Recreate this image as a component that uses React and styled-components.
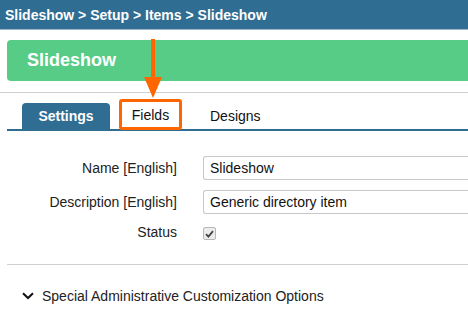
import React from "react";
import styled, { createGlobalStyle } from "styled-components";

const GlobalStyle = createGlobalStyle`
  body {
    margin: 0;
    font-family: "Liberation Sans", Arial, sans-serif;
    background: #fff;
  }
`;

const Page = styled.div`
  position: relative;
  width: 468px;
  height: 323px;
  overflow: hidden;
`;

const TopBar = styled.div`
  height: 29px;
  background: #2f6d93;
  border-bottom: 1px solid #9bb5c9;
  display: flex;
  align-items: center;
  padding-left: 5px;
  color: #fff;
  font-weight: bold;
  font-size: 14px;
`;

const Banner = styled.div`
  margin: 10px 0 0 7px;
  height: 41px;
  background: #57cc87;
  border-radius: 4px 0 0 4px;
  display: flex;
  align-items: center;
  padding-left: 20px;
  color: #fff;
  font-weight: bold;
  font-size: 18px;
`;

const Rule = styled.div`
  height: 1px;
  background: #cfcfcf;
  margin-top: ${(p) => p.gap || 11}px;
  margin-left: ${(p) => p.indent || 0}px;
`;

const Tabs = styled.div`
  display: flex;
  align-items: flex-end;
  margin: 7px 0 0 7px;
  padding-left: 15px;
  height: 29px;
  border-bottom: 2px solid #2f6d93;
`;

const Tab = styled.div`
  height: 26px;
  display: flex;
  align-items: center;
  justify-content: center;
  font-size: 14px;
  color: #111;
  padding: 0 14px;
  margin-left: ${(p) => p.offset || 0}px;
  ${(p) =>
    p.active &&
    `
    background: #2f6d93;
    color: #fff;
    font-weight: bold;
    border-radius: 4px 4px 0 0;
    width: 88px;
    padding: 0;
  `}
`;

const Highlight = styled(Tab)`
  margin-left: 9px;
  height: 25px;
  width: 57px;
  padding: 0;
  border: 3px solid #ff6600;
  border-radius: 3px;
  margin-bottom: -1px;
`;

const Form = styled.div`
  display: grid;
  grid-template-columns: 177px 1fr;
  column-gap: 26px;
  row-gap: 10px;
  padding-top: 25px;
  align-items: center;
`;

const Label = styled.div`
  text-align: right;
  font-size: 14px;
  color: #222;
`;

const Input = styled.div`
  height: 22px;
  border: 1px solid #c8c8c8;
  border-right: none;
  border-radius: 3px 0 0 3px;
  display: flex;
  align-items: center;
  padding-left: 6px;
  font-size: 14px;
  color: #111;
`;

const Check = styled.div`
  width: 11px;
  height: 11px;
  border: 1px solid #b8b8b8;
  border-radius: 2px;
  background: #ececec;
  display: flex;
  align-items: center;
  justify-content: center;
  margin-top: 3px;
`;

const Collapse = styled.div`
  display: flex;
  align-items: center;
  gap: 8px;
  margin: 23px 0 0 22px;
  font-size: 14px;
  color: #222;
`;

const Arrow = styled.svg`
  position: absolute;
  left: 144px;
  top: 39px;
`;

export default function App() {
  return (
    <Page>
      <GlobalStyle />
      <TopBar>Slideshow &gt; Setup &gt; Items &gt; Slideshow</TopBar>
      <Banner>Slideshow</Banner>
      <Rule />
      <Tabs>
        <Tab active>Settings</Tab>
        <Highlight>Fields</Highlight>
        <Tab offset={14}>Designs</Tab>
      </Tabs>
      <Form>
        <Label>Name [English]</Label>
        <Input>Slideshow</Input>
        <Label>Description [English]</Label>
        <Input>Generic directory item</Input>
        <Label>Status</Label>
        <div>
          <Check>
            <svg width="9" height="8" viewBox="0 0 9 8">
              <path d="M1 4.2 L3.4 6.6 L8 1.2" stroke="#444" strokeWidth="1.8" fill="none" />
            </svg>
          </Check>
        </div>
      </Form>
      <Rule indent={7} gap={24} />
      <Collapse>
        <svg width="12" height="8" viewBox="0 0 12 8">
          <path d="M1 1.2 L6 6 L11 1.2" stroke="#111" strokeWidth="2" fill="none" />
        </svg>
        Special Administrative Customization Options
      </Collapse>
      <Arrow width="18" height="60" viewBox="0 0 18 60">
        <rect x="7" y="0" width="4" height="40" fill="#ff6600" />
        <path d="M0 38 L18 38 L9 59 Z" fill="#ff6600" />
      </Arrow>
    </Page>
  );
}
